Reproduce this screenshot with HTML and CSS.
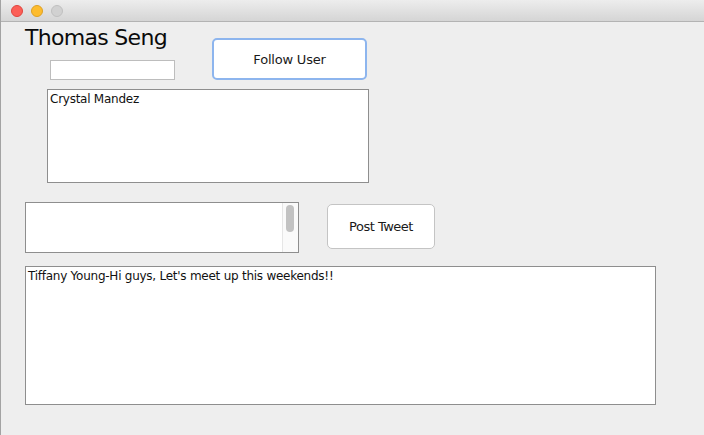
FILE: index.html
```html
<!DOCTYPE html>
<html>
<head>
<meta charset="utf-8">
<link rel="stylesheet" href="styles.css">
</head>
<body>
<div class="frame">
  <div class="titlebar">
    <span class="light red"></span>
    <span class="light yellow"></span>
    <span class="light gray"></span>
  </div>
  <div class="window">
    <div class="top-row">
      <div class="name-col">
        <div class="name">Thomas Seng</div>
        <div class="field"></div>
      </div>
      <button class="btn btn-focused">Follow User</button>
    </div>
    <div class="list following">
      <div class="item">Crystal Mandez</div>
    </div>
    <div class="compose-row">
      <div class="textarea">
        <div class="scrolltrack"><div class="thumb"></div></div>
      </div>
      <button class="btn btn-post">Post Tweet</button>
    </div>
    <div class="list feed">
      <div class="item">Tiffany Young-Hi guys, Let's meet up this weekends!!</div>
    </div>
  </div>
</div>
</body>
</html>
```
FILE: styles.css
```css
html, body {
  margin: 0;
  padding: 0;
  width: 704px;
  height: 435px;
  overflow: hidden;
  background: #eeeeee;
  font-family: "DejaVu Sans", "Liberation Sans", sans-serif;
  color: #111;
}
.frame {
  height: 435px;
  border-left: 1px solid #a3a3a3;
  box-sizing: border-box;
}
.titlebar {
  height: 21px;
  border-bottom: 1px solid #b3b3b3;
  background: linear-gradient(#ededed, #d5d5d5);
  display: flex;
  align-items: center;
  gap: 8px;
  padding-left: 10px;
}
.light {
  width: 12px;
  height: 12px;
  border-radius: 50%;
  box-sizing: border-box;
}
.red { background: #fc5f57; border: 1px solid #e0443e; }
.yellow { background: #fdbc2e; border: 1px solid #dea123; }
.gray { background: #d1d1d1; border: 1px solid #c0c0c0; }

.window {
  padding-left: 24px;
}
.top-row {
  display: flex;
  height: 58px;
}
.name-col {
  width: 187px;
}
.name {
  margin-top: 3px;
  font-size: 22px;
  line-height: 26px;
  letter-spacing: -0.7px;
  color: #0a0a0a;
}
.field {
  margin-top: 9px;
  margin-left: 25px;
  width: 125px;
  height: 20px;
  box-sizing: border-box;
  background: #fff;
  border: 1px solid #bdbdbd;
}
.btn {
  background: #fff;
  border: 1px solid #c4c4c4;
  border-radius: 5px;
  font-family: "DejaVu Sans", "Liberation Sans", sans-serif;
  font-size: 13px;
  color: #1a1a1a;
  padding: 0;
  box-sizing: border-box;
  display: flex;
  align-items: center;
  justify-content: center;
}
.btn-focused {
  margin-top: 16px;
  width: 155px;
  height: 42px;
  border: 2px solid #8db5ee;
  letter-spacing: -0.2px;
}
.btn-post {
  margin-top: 2px;
  margin-left: 28px;
  width: 108px;
  height: 45px;
  letter-spacing: -0.5px;
}
.list {
  background: #fff;
  border: 1px solid #8e8e8e;
  box-sizing: border-box;
}
.item {
  font-size: 12px;
  line-height: 15px;
  letter-spacing: -0.25px;
  padding: 2px 0 0 2px;
}
.following {
  margin-top: 9px;
  margin-left: 22px;
  width: 322px;
  height: 94px;
}
.compose-row {
  display: flex;
  margin-top: 19px;
}
.textarea {
  width: 274px;
  height: 51px;
  box-sizing: border-box;
  background: #fff;
  border: 1px solid #8e8e8e;
  display: flex;
  justify-content: flex-end;
}
.scrolltrack {
  width: 16px;
  background: #fafafa;
  border-left: 1px solid #e6e6e6;
  box-sizing: border-box;
  padding: 2px 0 0 3px;
}
.thumb {
  width: 8px;
  height: 27px;
  border-radius: 4px;
  background: #c2c2c2;
}
.feed {
  margin-top: 13px;
  width: 631px;
  height: 139px;
}
.feed .item {
  padding-top: 2px;
}
```
